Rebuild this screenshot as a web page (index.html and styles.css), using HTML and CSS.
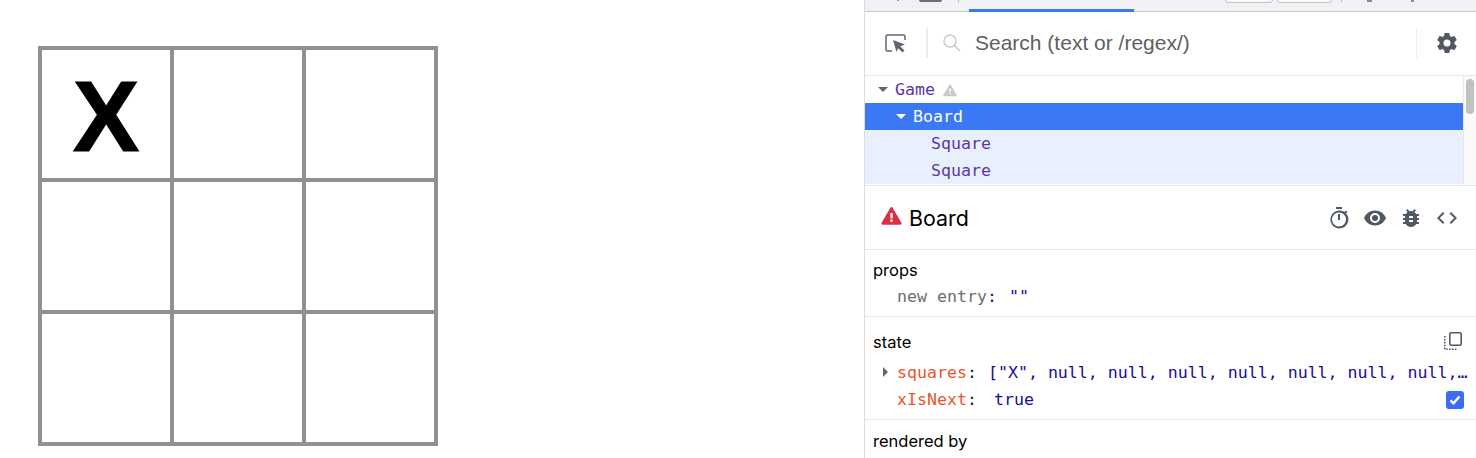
FILE: index.html
```html
<!DOCTYPE html>
<html lang="en">
<head>
  <meta charset="UTF-8">
  <meta name="viewport" content="width=device-width, initial-scale=1.0">
  <title>Tic Tac Toe</title>
  <link rel="stylesheet" href="styles.css">
</head>
<body>
<div class="page">
  <main class="game">
    <div class="board">
      <div class="square">X</div>
      <div class="square"></div>
      <div class="square"></div>
      <div class="square"></div>
      <div class="square"></div>
      <div class="square"></div>
      <div class="square"></div>
      <div class="square"></div>
      <div class="square"></div>
    </div>
  </main>

  <aside class="devtools">
    <div class="tabstrip">
      <div class="tab-icons">
        <span class="tab-sliver"></span>
        <span class="tab-folder"></span>
        <span class="tab-sep"></span>
      </div>
      <div class="tab-active"></div>
      <div class="tab-right">
        <span class="tab-btn tab-btn-a"></span>
        <span class="tab-btn tab-btn-b"></span>
        <span class="tab-sep"></span>
        <span class="tab-dot"></span>
        <span class="tab-dot tab-dot-b"></span>
      </div>
    </div>

    <div class="searchbar">
      <svg class="icon-inspect" width="24" height="24" viewBox="0 0 24 24">
        <path d="M8 20H3.5A1.5 1.5 0 0 1 2 18.5V5.500A1.500 1.500 0 0 1 3.500 4h16A1.500 1.500 0 0 1 21 5.500V9" fill="none" stroke="#5f6673" stroke-width="1.500"/>
        <path d="M9 9l12 4.500-4.800 1.800 4.300 4.300-2 2-4.300-4.300L12.500 21z" fill="#5f6673"/>
      </svg>
      <span class="bar-sep"></span>
      <svg class="icon-search" width="18" height="18" viewBox="0 0 18 18">
        <circle cx="7" cy="7" r="6" fill="none" stroke="#c9c9c9" stroke-width="1.500"/>
        <path d="M11.500 11.500L17 17" stroke="#c9c9c9" stroke-width="1.500"/>
      </svg>
      <span class="search-text">Search (text or /regex/)</span>
      <span class="bar-sep bar-sep-light"></span>
      <svg class="icon-gear" width="24" height="24" viewBox="0 0 24 24">
        <path fill="#505866" fill-rule="evenodd" d="M19.430 12.980c.04-.32.070-.64.070-.98s-.030-.66-.070-.98l2.110-1.650c.19-.15.240-.42.120-.64l-2-3.460c-.12-.22-.39-.3-.61-.22l-2.490 1c-.52-.4-1.080-.73-1.690-.98l-.38-2.650A.488.488 0 0 0 14 2h-4c-.25 0-.46.18-.49.42l-.38 2.650c-.61.25-1.170.59-1.690.98l-2.490-1c-.23-.09-.49 0-.61.22l-2 3.460c-.13.22-.07.49.12.64l2.110 1.650c-.04.32-.07.65-.07.98s.030.66.070.98l-2.110 1.650c-.19.15-.24.42-.12.64l2 3.460c.12.22.39.3.61.22l2.490-1c.52.4 1.080.73 1.690.98l.38 2.650c.03.24.24.42.49.42h4c.25 0 .46-.18.49-.42l.38-2.650c.61-.25 1.170-.59 1.690-.98l2.490 1c.23.09.49 0 .61-.22l2-3.460c.12-.22.07-.49-.12-.64l-2.110-1.650zM12 15.500a3.500 3.500 0 1 1 0-7 3.500 3.500 0 0 1 0 7z"/>
      </svg>
    </div>

    <div class="tree-wrap">
      <div class="tree">
        <div class="tree-row">
          <span class="caret"></span><span class="comp">Game</span>
          <svg class="icon-warn" width="14" height="14" viewBox="0 0 24 24">
            <path d="M12 4L22 21H2z" fill="#c9c9cc" stroke="#c9c9cc" stroke-width="3" stroke-linejoin="round"/>
            <path d="M10.700 9.500h2.600v5.500h-2.600zM10.700 16.500h2.600v2.400h-2.600z" fill="#fff"/>
          </svg>
        </div>
        <div class="tree-row tree-row-selected tree-indent-1">
          <span class="caret caret-white"></span><span class="comp">Board</span>
        </div>
        <div class="tree-row tree-row-inside tree-indent-2"><span class="comp">Square</span></div>
        <div class="tree-row tree-row-inside tree-indent-2"><span class="comp">Square</span></div>
      </div>
      <div class="scrollbar"><div class="scroll-thumb"></div></div>
    </div>

    <div class="comp-header">
      <svg class="icon-error" width="21" height="21" viewBox="0 0 24 24">
        <path d="M12 4L22 21H2z" fill="#dc2f45" stroke="#dc2f45" stroke-width="3" stroke-linejoin="round"/>
        <path d="M10.700 9h2.600v6h-2.600zM10.700 16.500h2.600v2.500h-2.600z" fill="#fff"/>
      </svg>
      <span class="comp-title">Board</span>
      <div class="comp-actions">
        <svg width="24" height="24" viewBox="0 0 24 24"><path fill="#505866" d="M9 1h6v2H9zM11 8h2v6h-2zM19 7.400l1.400-1.400-1.400-1.400-1.500 1.500A9 9 0 1 0 19 7.400zM12 20.500a7 7 0 1 1 0-14 7 7 0 0 1 0 14z"/></svg>
        <svg width="24" height="24" viewBox="0 0 24 24"><path fill="#505866" d="M12 4.500C7 4.500 2.700 7.600 1 12c1.700 4.400 6 7.500 11 7.500s9.300-3.100 11-7.500c-1.700-4.400-6-7.500-11-7.500zM12 17a5 5 0 1 1 0-10 5 5 0 0 1 0 10zm0-8a3 3 0 1 0 0 6 3 3 0 0 0 0-6z"/></svg>
        <svg width="24" height="24" viewBox="0 0 24 24"><path fill="#505866" fill-rule="evenodd" d="M20 8h-2.810a5.985 5.985 0 0 0-1.820-1.960L17 4.410 15.590 3l-2.170 2.170a6 6 0 0 0-2.830 0L8.410 3 7 4.410l1.620 1.630C7.880 6.550 7.260 7.220 6.810 8H4v2h2.090c-.05.330-.09.660-.09 1v1H4v2h2v1c0 .34.040.67.090 1H4v2h2.810c1.040 1.790 2.970 3 5.190 3s4.150-1.210 5.190-3H20v-2h-2.090c.05-.33.090-.66.090-1v-1h2v-2h-2v-1c0-.34-.04-.67-.09-1H20V8zm-6 8h-4v-2h4v2zm0-4h-4v-2h4v2z"/></svg>
        <svg width="24" height="24" viewBox="0 0 24 24"><path fill="#505866" d="M9.400 16.600L4.800 12l4.600-4.600L8 6l-6 6 6 6 1.400-1.400zm5.200 0l4.600-4.600-4.600-4.600L16 6l6 6-6 6-1.400-1.400z"/></svg>
      </div>
    </div>

    <section class="panel panel-props">
      <div class="panel-head">props</div>
      <div class="kv kv-muted"><span class="key">new entry</span><span class="colon">:</span><span class="val">""</span></div>
    </section>

    <section class="panel panel-state">
      <div class="panel-head panel-head-state">
        <span>state</span>
        <svg width="20" height="20" viewBox="0 0 20 20">
          <rect x="6.800" y="0.800" width="11.400" height="12.400" rx="1.500" fill="none" stroke="#505866" stroke-width="1.600"/>
          <path d="M1.800 4v13.200h12.200" fill="none" stroke="#505866" stroke-width="1.600" stroke-dasharray="1.600 1.300"/>
        </svg>
      </div>
      <div class="state-rows">
        <div class="kv">
          <span class="caret-right"></span>
          <span class="key key-state">squares</span><span class="colon">:</span>
          <span class="val val-long">["X", null, null, null, null, null, null, null,…</span>
        </div>
        <div class="kv">
          <span class="key key-state">xIsNext</span><span class="colon">:</span>
          <span class="val val-bool">true</span>
          <span class="checkbox">
            <svg width="12" height="12" viewBox="0 0 12 12"><path d="M1.500 6.300l3 3L10.500 2.500" fill="none" stroke="#fff" stroke-width="2.400"/></svg>
          </span>
        </div>
      </div>
    </section>

    <section class="panel panel-rendered">
      <div class="panel-head">rendered by</div>
    </section>
  </aside>
</div>
</body>
</html>
```

FILE: styles.css
```css
* {
  margin: 0;
  padding: 0;
  box-sizing: border-box;
}

html, body {
  height: 458px;
  overflow: hidden;
  background-color: #fff;
}

.page {
  display: flex;
  height: 458px;
  font-family: 'Inter', 'Liberation Sans', sans-serif;
}

/* game */
.game {
  width: 864px;
  padding: 46px 0 0 38px;
}

.board {
  display: grid;
  grid-template-columns: repeat(3, 132px);
  grid-auto-rows: 132px;
}

.square {
  width: 136px;
  height: 136px;
  border: 4px solid #919191;
  padding-top: 3px;
  display: flex;
  justify-content: center;
  align-items: center;
  font-family: 'Liberation Sans', Arial, sans-serif;
  font-weight: 700;
  font-size: 100px;
  -webkit-text-stroke: 1px #000;
  line-height: 1;
  color: #000;
}

/* devtools */
.devtools {
  width: 612px;
  height: 458px;
  border-left: 1px solid #dcdcdc;
  overflow: hidden;
}

.tabstrip {
  display: flex;
  height: 12px;
  background-color: #f0f1f4;
  border-bottom: 1px solid #c9c9c9;
}

.tab-icons {
  display: flex;
  width: 104px;
  flex-shrink: 0;
}

.tab-sliver {
  width: 2px;
  height: 1px;
  margin: 0 20px 0 32px;
  background-color: #9a9a9a;
}

.tab-folder {
  width: 23px;
  height: 2px;
  background-color: #6e6e6e;
  border-radius: 0 0 2px 2px;
}

.tab-sep {
  width: 1px;
  height: 2px;
  background-color: #b5b5b5;
}

.tab-icons .tab-sep {
  margin-left: 16px;
}

.tab-active {
  width: 165px;
  height: 12px;
  border-bottom: 3px solid #3b78f6;
}

.tab-right {
  display: flex;
  padding-left: 91px;
}

.tab-btn {
  height: 4px;
  margin-top: -1px;
  background-color: #f8f8f8;
  border: 1px solid #c4c4c4;
  border-radius: 0 0 3px 3px;
}

.tab-btn-a { width: 48px; margin-right: 4px; }
.tab-btn-b { width: 55px; margin-right: 9px; }

.tab-dot {
  width: 5px;
  height: 2px;
  margin-left: 25px;
  background-color: #8a8a8a;
}

.tab-dot-b { width: 3px; margin-left: 39px; }

.searchbar {
  display: flex;
  align-items: center;
  height: 64px;
  border-bottom: 1px solid #e8e8e8;
  padding: 0 17px 1px 19px;
}

.icon-inspect {
  flex-shrink: 0;
}

.bar-sep {
  width: 2px;
  height: 30px;
  margin: 0 15px 0 18px;
  background-color: #ececec;
}

.bar-sep-light {
  width: 1px;
  margin: 0 18px 0 auto;
}

.icon-search {
  flex-shrink: 0;
}

.search-text {
  margin-left: 14px;
  font-family: 'Liberation Sans', Arial, sans-serif;
  font-size: 21px;
  color: #5f5f5f;
}

.tree-wrap {
  display: flex;
  height: 110px;
  border-bottom: 1px solid #e8e8e8;
}

.tree {
  flex: 1;
}

.tree-row {
  display: flex;
  align-items: center;
  height: 27px;
  padding-left: 13px;
  font-family: 'DejaVu Sans Mono', 'Liberation Mono', monospace;
  font-size: 16.6px;
  color: #5e35a8;
}

.tree-indent-1 { padding-left: 31px; }
.tree-indent-2 { padding-left: 66px; }

.tree-row-selected {
  background-color: #3b78f6;
  color: #fff;
}

.tree-row-inside {
  background-color: #e9f0fd;
}

.caret {
  width: 0;
  height: 0;
  margin-right: 7px;
  border-left: 5px solid transparent;
  border-right: 5px solid transparent;
  border-top: 5px solid #5f6673;
}

.caret-white {
  border-top-color: #fff;
}

.icon-warn {
  margin-left: 8px;
}

.scrollbar {
  width: 13px;
  background-color: #fafafa;
  border-left: 1px solid #e8e8e8;
  padding: 3px 2px 0 2px;
}

.scroll-thumb {
  width: 8px;
  height: 35px;
  border-radius: 4px;
  background-color: #c1c1c1;
}

.comp-header {
  display: flex;
  align-items: center;
  height: 64px;
  padding: 0 17px 0 16px;
  border-bottom: 1px solid #e8e8e8;
}

.icon-error {
  margin-bottom: 5px;
}

.comp-title {
  margin-left: 7px;
  font-size: 21.4px;
  color: #000;
}

.comp-actions {
  display: flex;
  align-items: center;
  gap: 12px;
  margin-left: auto;
}

.panel {
  padding: 0 8px;
  border-bottom: 1px solid #e8e8e8;
}

.panel-props { height: 67px; padding-top: 10px; }
.panel-state { height: 103px; padding-top: 15px; }
.panel-rendered { border-bottom: none; padding-top: 11px; }

.panel-head {
  font-size: 16.5px;
  line-height: 20px;
  color: #000;
}

.panel-head-state {
  display: flex;
  justify-content: space-between;
  align-items: center;
  padding-right: 5px;
}

.state-rows {
  margin-top: 7px;
}

.kv {
  display: flex;
  align-items: center;
  height: 27px;
  padding-left: 24px;
  font-family: 'DejaVu Sans Mono', 'Liberation Mono', monospace;
  font-size: 16.6px;
  white-space: pre;
  position: relative;
}

.kv-muted { margin-top: 3px; }

.key { color: #6d6d6d; }
.key-state { color: #e9562e; }
.colon { color: #222; margin-right: 12px; }
.val { color: #1a0a9c; }

.val-long {
  margin-left: -1px;
}

.val-bool { margin-left: 5px; }

.caret-right {
  position: absolute;
  left: 10px;
  top: 8px;
  width: 0;
  height: 0;
  border-top: 5px solid transparent;
  border-bottom: 5px solid transparent;
  border-left: 5px solid #5f6673;
}

.checkbox {
  display: flex;
  justify-content: center;
  align-items: center;
  width: 18px;
  height: 18px;
  margin-left: auto;
  margin-right: 4px;
  border-radius: 3px;
  background-color: #3b6cf6;
}
```
